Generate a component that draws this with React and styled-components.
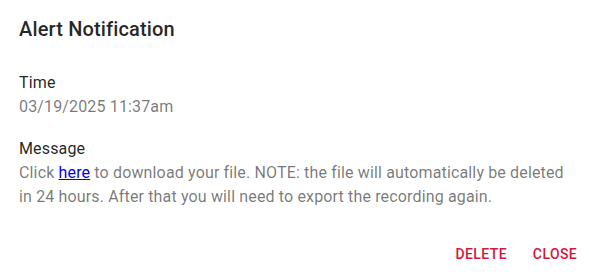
import styled, { createGlobalStyle } from 'styled-components';

const Global = createGlobalStyle`
  body {
    margin: 0;
    background: #fff;
    font-family: Roboto, "Liberation Sans", sans-serif;
  }
`;

function App() {
  return (
    <>
      <Global />
      <S.Dialog>
        <S.Title>Alert Notification</S.Title>
        <S.Content>
          <S.Field>
            <S.Label>Time</S.Label>
            <S.Value>03/19/2025 11:37am</S.Value>
          </S.Field>
          <S.Field>
            <S.Label>Message</S.Label>
            <S.Value>
              Click <S.Link href='#download'>here</S.Link> to download your file. NOTE: the file
              will automatically be deleted in 24 hours. After that you will need to export the
              recording again.
            </S.Value>
          </S.Field>
        </S.Content>
        <S.Actions>
          <S.Button>Delete</S.Button>
          <S.Button>Close</S.Button>
        </S.Actions>
      </S.Dialog>
    </>
  );
}

// -------------------------------------------------- styling ----------------------------------------------
const S = {};
S.Dialog = styled.div`
  width: 589px;
  height: 274px;
  display: flex;
  flex-direction: column;
  box-sizing: border-box;
`;

S.Title = styled.h2`
  margin: 0;
  padding: 13px 19px 0;
  font-size: 20px;
  font-weight: 500;
  letter-spacing: 0.0075em;
  line-height: 32px;
  color: rgba(0, 0, 0, 0.87);
`;

S.Content = styled.div`
  padding: 26px 19px 0;
  display: flex;
  flex-direction: column;
  gap: 18px;
`;

S.Field = styled.div`
  display: flex;
  flex-direction: column;
`;

S.Label = styled.div`
  font-size: 16px;
  line-height: 24px;
  letter-spacing: 0.00938em;
  color: rgba(0, 0, 0, 0.87);
`;

S.Value = styled.div`
  font-size: 16px;
  line-height: 24px;
  letter-spacing: 0.00938em;
  color: rgba(0, 0, 0, 0.54);
  max-width: 550px;
`;

S.Link = styled.a`
  color: #0000ee;
`;

S.Actions = styled.div`
  margin-top: auto;
  display: flex;
  justify-content: flex-end;
  gap: 8px;
  padding: 0 2px 2px;
`;

S.Button = styled.button`
  border: 0;
  background: none;
  padding: 8px;
  min-width: 64px;
  font-family: inherit;
  font-size: 14px;
  font-weight: 500;
  letter-spacing: 0.02857em;
  text-transform: uppercase;
  line-height: 20px;
  color: #d6153c;
  cursor: pointer;
`;

export default App;
